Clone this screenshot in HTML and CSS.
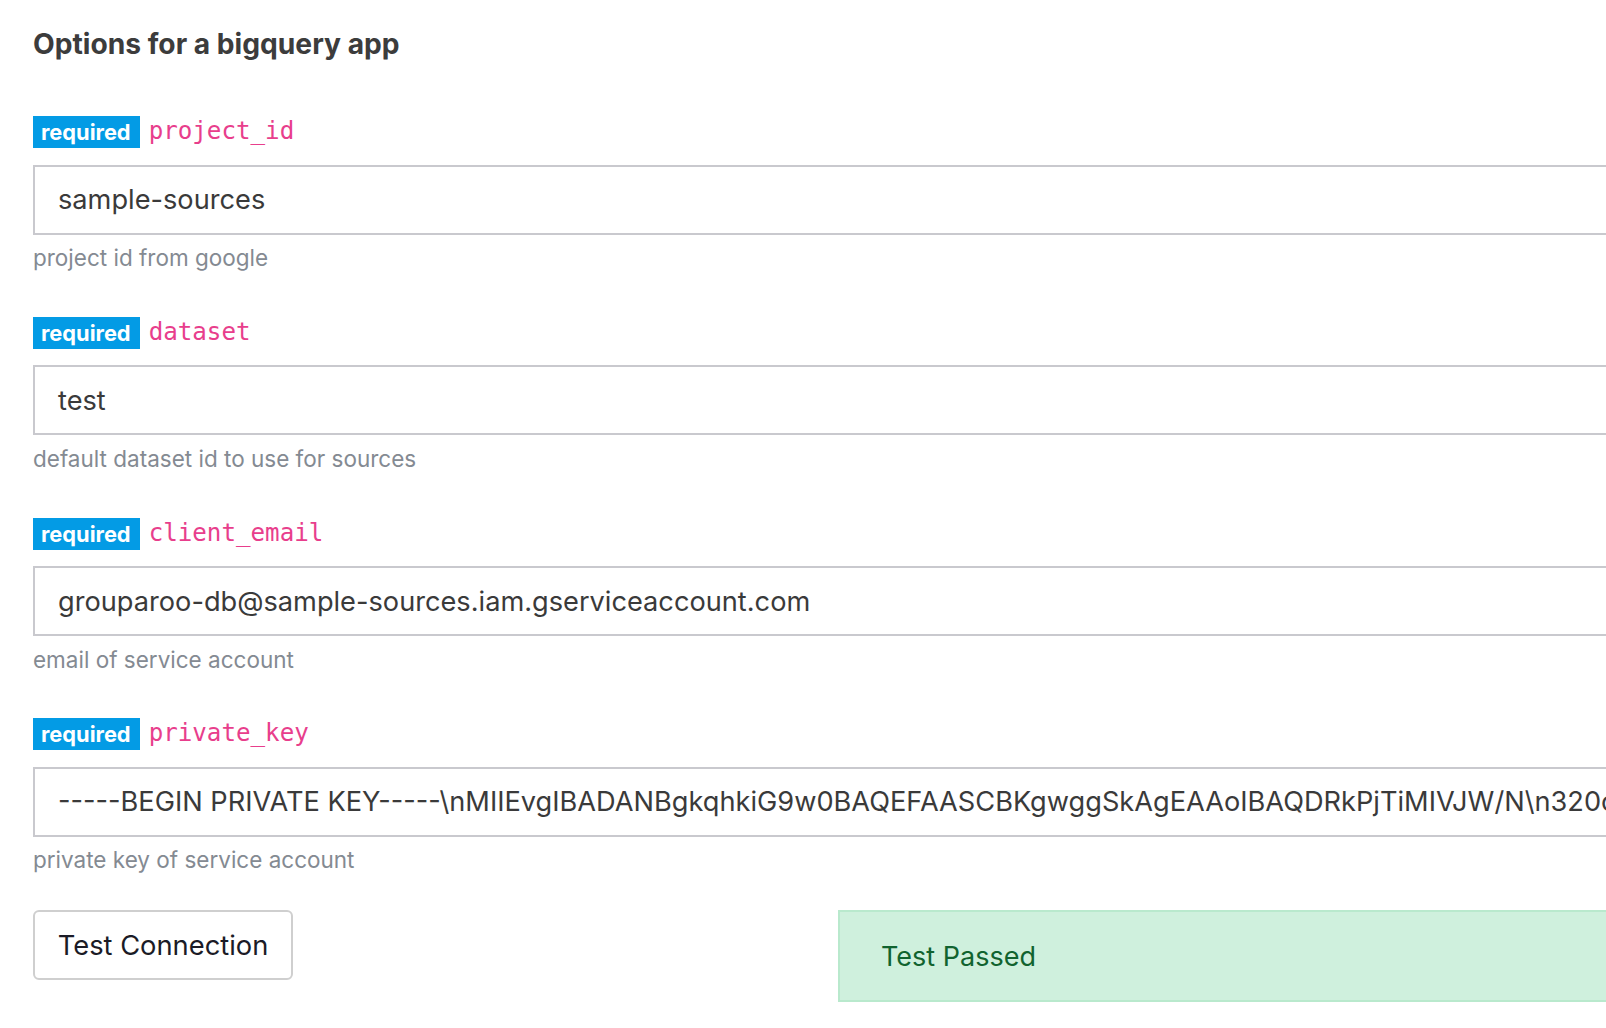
FILE: index.html
```html
<!DOCTYPE html>
<html lang="en">
<head>
<meta charset="utf-8">
<title>Options for a bigquery app</title>
<link rel="stylesheet" href="styles.css">
</head>
<body>
<div class="page">
  <h2 class="title">Options for a bigquery app</h2>

  <div class="field">
    <div class="label"><span class="badge">required</span><code class="name">project_id</code></div>
    <div class="input">sample-sources</div>
    <div class="help">project id from google</div>
  </div>

  <div class="field">
    <div class="label"><span class="badge">required</span><code class="name">dataset</code></div>
    <div class="input">test</div>
    <div class="help">default dataset id to use for sources</div>
  </div>

  <div class="field">
    <div class="label"><span class="badge">required</span><code class="name">client_email</code></div>
    <div class="input">grouparoo-db@sample-sources.iam.gserviceaccount.com</div>
    <div class="help">email of service account</div>
  </div>

  <div class="field">
    <div class="label"><span class="badge">required</span><code class="name">private_key</code></div>
    <div class="input">-----BEGIN PRIVATE KEY-----\nMIIEvgIBADANBgkqhkiG9w0BAQEFAASCBKgwggSkAgEAAoIBAQDRkPjTiMIVJW/N\n320c</div>
    <div class="help">private key of service account</div>
  </div>

  <div class="actions">
    <button class="btn" type="button">Test Connection</button>
    <div class="alert">Test Passed</div>
  </div>
</div>
</body>
</html>
```

FILE: styles.css
```css
html, body {
  margin: 0;
  padding: 0;
  background: #ffffff;
  overflow: hidden;
}

body {
  font-family: Inter, "Liberation Sans", Arial, sans-serif;
  color: #3d3d3d;
}

.page {
  width: 2200px;
  padding: 26px 0 0 33px;
  box-sizing: border-box;
}

.title {
  margin: 0 0 54px 0;
  font-size: 28.2px;
  line-height: 36px;
  font-weight: 700;
  color: #3c3c3c;
}

.field {
  margin-bottom: 43.8px;
}

.label {
  display: flex;
  align-items: center;
  height: 32px;
}

.badge {
  display: inline-block;
  height: 32px;
  line-height: 32px;
  padding: 0 9px 0 8px;
  background: #039be5;
  color: #ffffff;
  font-weight: 700;
  font-size: 21.8px;
}

.name {
  margin-left: 9px;
  font-family: "DejaVu Sans Mono", "Liberation Mono", monospace;
  font-size: 24.2px;
  color: #e83e8c;
  line-height: 32px;
  position: relative;
  top: -1px;
}

.input {
  margin-top: 16.5px;
  height: 70px;
  box-sizing: border-box;
  border: 2px solid #c9c9ce;
  padding: 0 0 0 23px;
  display: flex;
  align-items: center;
  font-size: 27.2px;
  color: #3a3a3a;
  white-space: nowrap;
  overflow: hidden;
}

.help {
  margin-top: 8.5px;
  line-height: 30px;
  font-size: 22.5px;
  color: #848a92;
}

.actions {
  display: flex;
  align-items: flex-start;
  margin-top: -8.8px;
}

.btn {
  width: 260px;
  height: 70px;
  box-sizing: border-box;
  border: 2px solid #cfcfcf;
  border-radius: 6px;
  background: #ffffff;
  font-family: Inter, "Liberation Sans", Arial, sans-serif;
  font-size: 27.3px;
  color: #1b1b26;
  padding: 0;
  text-align: center;
  cursor: pointer;
}

.alert {
  margin-left: 545px;
  width: 1200px;
  height: 92px;
  box-sizing: border-box;
  background: #cff0dd;
  border: 2px solid #b9e9cd;
  padding: 0 0 0 41px;
  display: flex;
  align-items: center;
  font-size: 27px;
  color: #11632f;
}
```
